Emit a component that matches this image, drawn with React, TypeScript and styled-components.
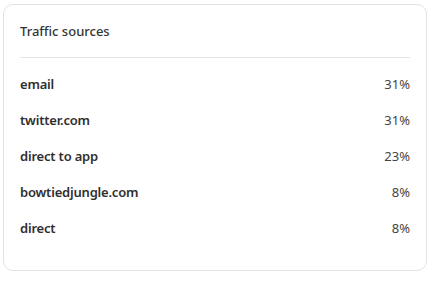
import React from "react";
import styled, { createGlobalStyle } from "styled-components";

const GlobalStyle = createGlobalStyle`
  html, body {
    margin: 0;
    padding: 0;
    background: #ffffff;
    font-family: "Noto Sans", "Open Sans", sans-serif;
  }
`;

const Page = styled.div`
  padding: 4px 5px 0 3px;
`;

const Card = styled.div`
  display: flex;
  flex-direction: column;
  border: 1px solid #e2e2e2;
  border-radius: 10px;
  padding: 16px 16px 24px 16px;
  background: #ffffff;
`;

const Header = styled.div`
  height: 20px;
  padding-bottom: 16px;
  border-bottom: 1px solid #e6e6e6;
  display: flex;
  align-items: center;
`;

const Title = styled.h3`
  margin: 0;
  font-size: 13px;
  font-weight: 500;
  color: #333333;
`;

const List = styled.div`
  display: flex;
  flex-direction: column;
  padding-top: 8px;
`;

const Row = styled.div`
  display: flex;
  justify-content: space-between;
  align-items: center;
  height: 36px;
  font-size: 13px;
`;

const Source = styled.span`
  font-weight: 600;
  letter-spacing: -0.2px;
  color: #2f2f2f;
`;

const Share = styled.span`
  color: #444444;
`;

const sources = [
  { name: "email", share: "31%" },
  { name: "twitter.com", share: "31%" },
  { name: "direct to app", share: "23%" },
  { name: "bowtiedjungle.com", share: "8%" },
  { name: "direct", share: "8%" },
];

export default function App() {
  return (
    <Page>
      <GlobalStyle />
      <Card>
        <Header>
          <Title>Traffic sources</Title>
        </Header>
        <List>
          {sources.map((s) => (
            <Row key={s.name}>
              <Source>{s.name}</Source>
              <Share>{s.share}</Share>
            </Row>
          ))}
        </List>
      </Card>
    </Page>
  );
}
